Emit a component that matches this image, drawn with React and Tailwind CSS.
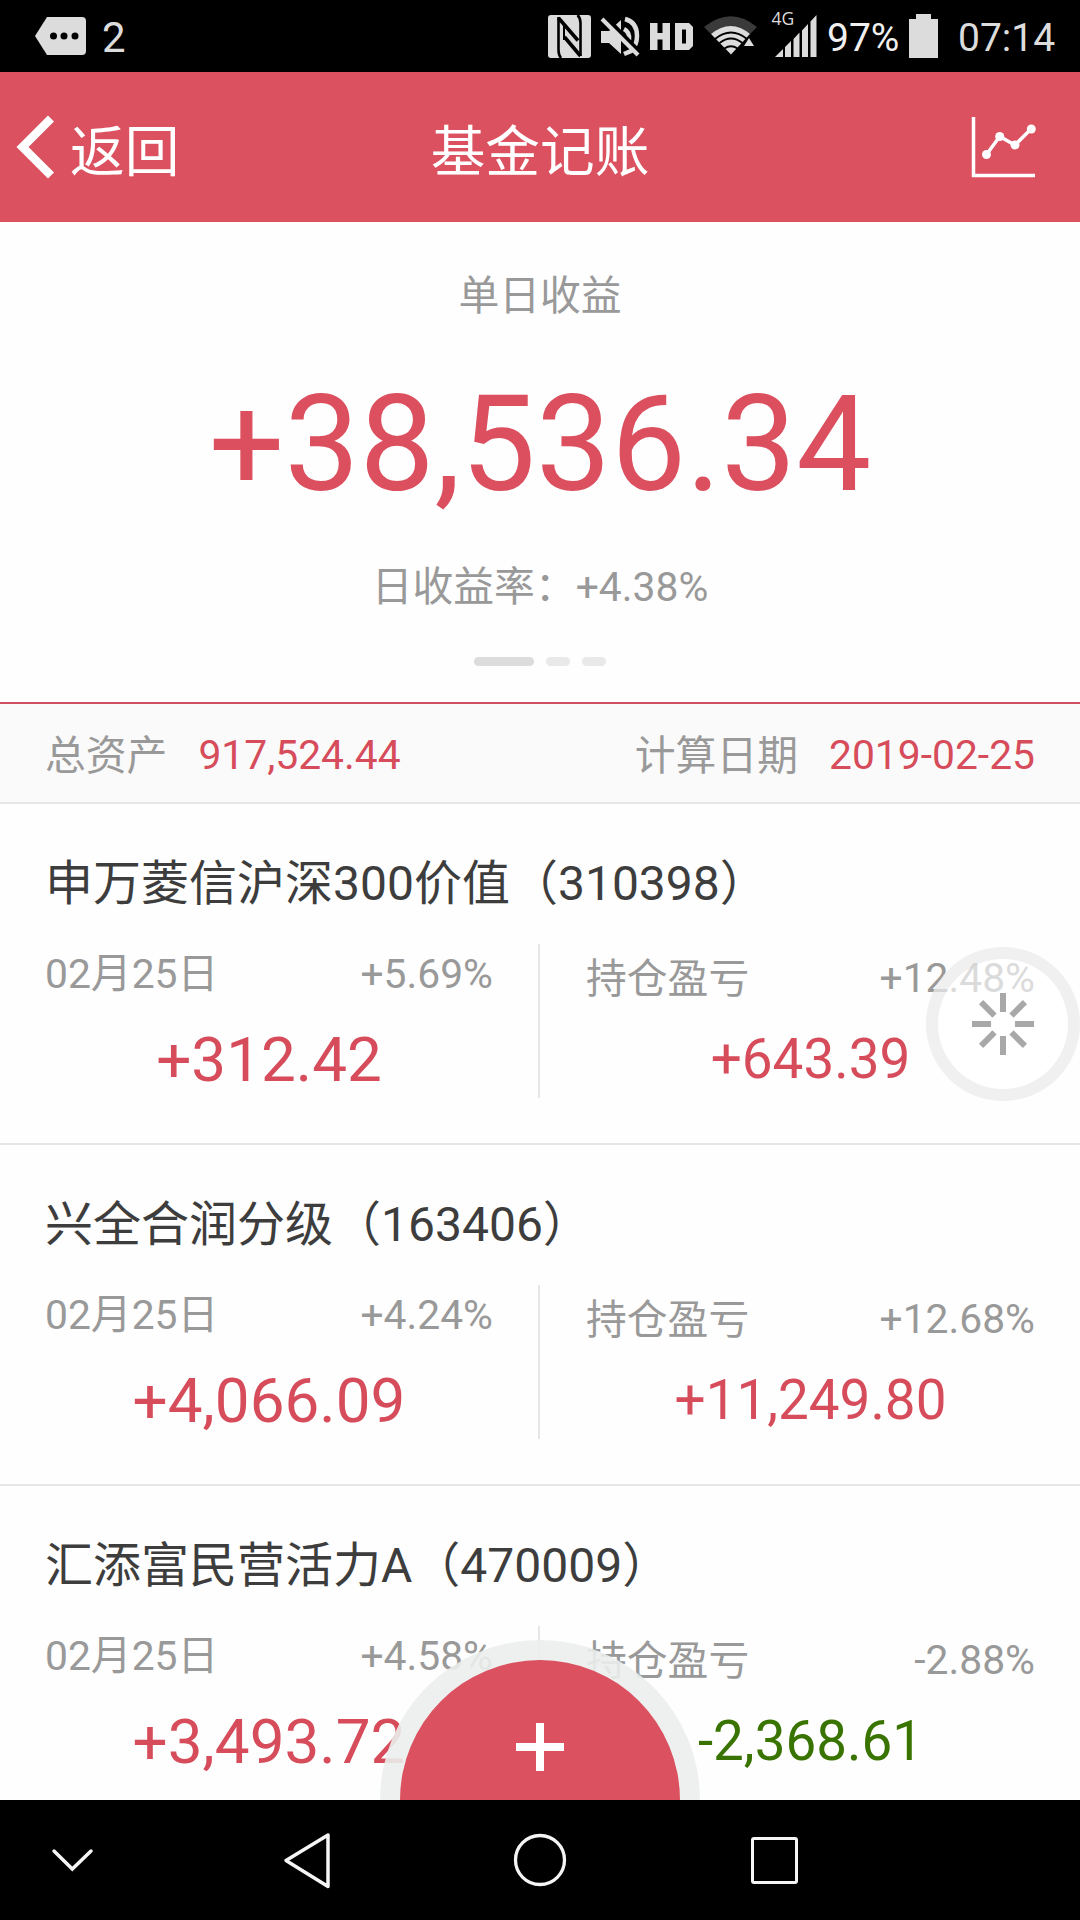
import { useState } from "react"

const funds = [
    { name: "申万菱信沪深300价值（310398）", date: "02月25日", dayRate: "+5.69%", dayProfit: "+312.42", holdRate: "+12.48%", holdProfit: "+643.39" },
    { name: "兴全合润分级（163406）", date: "02月25日", dayRate: "+4.24%", dayProfit: "+4,066.09", holdRate: "+12.68%", holdProfit: "+11,249.80" },
    { name: "汇添富民营活力A（470009）", date: "02月25日", dayRate: "+4.58%", dayProfit: "+3,493.72", holdRate: "-2.88%", holdProfit: "-2,368.61" },
]

const App = () => {
    const [activeSlide, setActiveSlide] = useState(0)

    return (
        <div className="relative flex flex-col w-[1080px] h-[1920px] overflow-hidden bg-[#fefefe] font-['Roboto','Noto_Sans_CJK_SC',sans-serif]">
            <StatusBar />
            <Header />

            <div className="flex flex-col items-center h-[480px] shrink-0 text-[#999999] text-[40.8px]">
                <div className="mt-[44px] h-[60px] leading-[60px]">单日收益</div>
                <div className="mt-[39px] h-[160px] leading-[160px] text-[133.5px] text-[#db4f5e]">+38,536.34</div>
                <div className="mt-[32px] h-[60px] leading-[60px]">日收益率：+4.38%</div>
                <div className="mt-[40px] flex gap-[12px]">
                    {[0, 1, 2].map((slide) => (
                        <div key={slide} onClick={() => setActiveSlide(slide)} className={`h-[9px] rounded-full ${slide === activeSlide ? "w-[60px] bg-[#dcdcdc]" : "w-[24px] bg-[#e9e9e9]"}`} />
                    ))}
                </div>
            </div>

            <div className="flex justify-between items-center h-[102px] shrink-0 px-[45px] pt-[4px] bg-[#fafafa] border-t-2 border-t-[#cf5160] border-b-2 border-b-[#e6e6e6] text-[40.8px] text-[#999999]">
                <div className="flex gap-[31px] h-[60px] leading-[60px]">
                    <span className="pt-px">总资产</span>
                    <span className="text-[#d64c5b]">917,524.44</span>
                </div>
                <div className="flex gap-[31px] h-[60px] leading-[60px]">
                    <span className="pt-px">计算日期</span>
                    <span className="text-[#d64c5b]">2019-02-25</span>
                </div>
            </div>

            <div className="flex-1 min-h-0 overflow-hidden">
                {funds.map((fund) => <FundRow key={fund.name} fund={fund} />)}
            </div>

            <NavBar />
            <Spinner />
            <AddButton />
        </div>
    )
}

const FundRow = ({ fund }) => {
    const holdColor = fund.holdProfit.startsWith("-") ? "text-[#397300]" : "text-[#d64c5b]"

    return (
        <div className="h-[341px] px-[45px] border-b-2 border-[#e6e6e6]">
            <div className="pt-[45px] h-[140px] leading-[70px] text-[48px] text-[#3d3d3d]">{fund.name}</div>
            <div className="flex h-[154px] text-[40.8px] text-[#999999]">
                <div className="w-[495px] pr-[45px] border-r-2 border-[#e6e6e6]">
                    <div className="flex justify-between h-[60px] leading-[60px]">
                        <span>{fund.date}</span>
                        <span>{fund.dayRate}</span>
                    </div>
                    <div className="mt-[16px] h-[80px] leading-[80px] text-center text-[62px] text-[#d64c5b]">{fund.dayProfit}</div>
                </div>
                <div className="flex-1 pl-[46px] pt-[4px]">
                    <div className="flex justify-between h-[60px] leading-[60px]">
                        <span className="pt-px">持仓盈亏</span>
                        <span>{fund.holdRate}</span>
                    </div>
                    <div className={`mt-[11px] h-[80px] leading-[80px] text-center text-[54.8px] ${holdColor}`}>{fund.holdProfit}</div>
                </div>
            </div>
        </div>
    )
}

const StatusBar = () => (
    <div className="flex items-center h-[72px] shrink-0 bg-black text-[#dcdcdc] leading-[72px]">
        <svg className="ml-[35px] w-[51px] h-[38px]" viewBox="0 0 51 38">
            <path d="M12 0H47Q51 0 51 4V34Q51 38 47 38H12L0 19Z" fill="#dcdcdc" />
            <circle cx="18.5" cy="19" r="3.5" />
            <circle cx="29" cy="19" r="3.5" />
            <circle cx="40" cy="19" r="3.5" />
        </svg>
        <span className="ml-[16px] w-[24px] pt-[3px] text-[42px]">2</span>

        {/* nfc, muted, hd, wifi, signal */}
        <svg className="ml-[420px] w-[272px] h-[72px]" viewBox="546 0 272 72" fill="#dcdcdc">
            <rect x="548" y="15" width="43" height="43" rx="3" />
            <path d="M558.500 17V50Q558.500 55 561 58M580.500 56V23Q580.500 18 577.500 15" fill="none" stroke="black" strokeWidth="2.600" />
            <path d="M558.500 18L578 40.500M564.500 37L580.500 56" fill="none" stroke="black" strokeWidth="3.600" />
            <path d="M564 26V40" stroke="black" strokeWidth="2" />

            <path d="M601 31H609L621 20V54L609 43H601Z" />
            <path d="M624 29Q630 32 629 40M625 19Q637 22 637 36Q637 45 631 51L624 54" fill="none" stroke="#dcdcdc" strokeWidth="4.500" />
            <path d="M604 16L641 54" stroke="black" strokeWidth="5" />
            <path d="M602 19L638 55" stroke="#dcdcdc" strokeWidth="4" />

            <path d="M650 23H657.500V33H662.500V23H670V50H662.500V39.500H657.500V50H650ZM675 23H689L693 27V46L689 50H675ZM682 29.500V43.500H686V29.500Z" fillRule="evenodd" />

            <path d="M704 27Q731 5.500 757 27L750 34Q731 19 711 34Z" fill="#3a3a3a" />
            <path d="M711 34Q731 18 750 34L731 54.500Z" />
            <path d="M715 39Q731 26 747 39M719.500 43Q731 34 742.500 43M724.500 48.500Q731 44 737.500 48.500" fill="none" stroke="black" strokeWidth="1.800" />
            <path d="M749 38L754 46H744Z" stroke="black" strokeWidth="3" paintOrder="stroke" />

            <path d="M775 57L783 49V57ZM785 47L791 41V57H785ZM793.500 39L799.500 32.500V57H793.500ZM802 30.500L808 24V57H802ZM810.500 21.500L816.500 15V57H810.500Z" />
            <text x="771.500" y="25" fontSize="17.500" fontFamily="Open Sans">4G</text>
        </svg>

        <span className="ml-[9px] w-[72px] pt-[3px] text-[39px] text-[#f0f0f0]">97%</span>
        <svg className="ml-[10px] w-[29px] h-[44px]" viewBox="0 0 29 44">
            <path d="M7 0H22V5H29V44H0V5H7Z" fill="#dcdcdc" />
        </svg>
        <span className="ml-[20px] pt-[3px] text-[39px]">07:14</span>
    </div>
)

const Header = () => (
    <div className="grid grid-cols-3 items-center h-[150px] shrink-0 bg-[#db5160] text-white text-[54.7px] leading-[80px]">
        <div className="flex items-center">
            <svg className="ml-[16px] w-[40px] h-[64px]" viewBox="0 0 40 64">
                <path d="M35 3.500L6.500 32L35 60.500" fill="none" stroke="white" strokeWidth="8.500" />
            </svg>
            <span className="ml-[14px] pt-[10px]">返回</span>
        </div>
        <div className="pt-[10px] text-center">基金记账</div>
        <svg className="justify-self-end mr-[43px] w-[66px] h-[62px]" viewBox="971 116 66 62" fill="none" stroke="white">
            <path d="M973.500 117V175.500H1035" strokeWidth="3.500" />
            <path d="M986.500 154.500L999.700 136.500L1015 145L1031 129" strokeWidth="3.500" />
            <g fill="white" stroke="none">
                <circle cx="986.500" cy="154.500" r="4.500" />
                <circle cx="999.700" cy="136.500" r="4.500" />
                <circle cx="1015" cy="145" r="4.500" />
                <circle cx="1031.300" cy="129" r="4.500" />
            </g>
        </svg>
    </div>
)

const Spinner = () => (
    <div className="absolute left-[926px] top-[947px] flex items-center justify-center w-[154px] h-[154px] rounded-full border-[12px] border-[#ebebeb]/75 bg-white/65 bg-clip-padding">
        <svg className="w-[64px] h-[64px]" viewBox="-32 -32 64 64">
            {[0, 45, 90, 135, 180, 225, 270, 315].map((angle) => (
                <rect key={angle} x="-3" y="-31" width="6" height="19" fill="#a8a8a8" transform={`rotate(${angle})`} />
            ))}
        </svg>
    </div>
)

// only the top half of the button is visible above the nav bar
const AddButton = () => (
    <div className="absolute left-[380px] top-[1640px] flex justify-center w-[320px] h-[160px] rounded-t-full bg-[#ebeeec]/90">
        <div className="mt-[20px] w-[280px] h-[140px] rounded-t-full bg-[#db5160]">
            <svg className="mt-[62px] mx-auto w-[50px] h-[50px]" viewBox="0 0 50 50">
                <path d="M25 1V49M1 25H49" stroke="white" strokeWidth="8" />
            </svg>
        </div>
    </div>
)

const NavBar = () => (
    <div className="flex items-center h-[120px] shrink-0 bg-black">
        <svg className="ml-[50px] w-[44px] h-[26px]" viewBox="50 1848 44 26" fill="none" stroke="#f5f5f5" strokeWidth="3.500" strokeLinecap="round">
            <path d="M54 1852L72.300 1870L91 1852" />
        </svg>
        <svg className="ml-[188px] w-[50px] h-[60px]" viewBox="282 1830 50 60" fill="none" stroke="#f5f5f5" strokeWidth="3.500" strokeLinejoin="round">
            <path d="M286 1860.500L328 1835V1886.500Z" />
        </svg>
        <svg className="ml-[180px] w-[56px] h-[56px]" viewBox="0 0 56 56" fill="none" stroke="#f5f5f5" strokeWidth="3.300">
            <circle cx="28" cy="28" r="24.500" />
        </svg>
        <div className="ml-[183px] w-[47px] h-[47px] rounded-[3px] border-[3.500px] border-[#f5f5f5]" />
    </div>
)

export default App
